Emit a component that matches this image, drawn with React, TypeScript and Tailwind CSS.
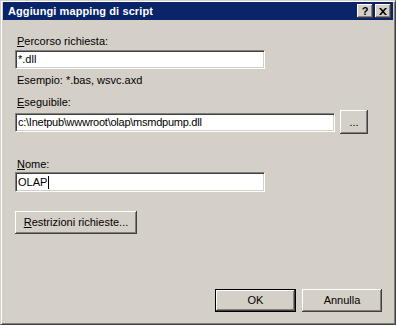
import React from "react";

const sunken =
  "bg-white border border-t-[#808080] border-l-[#808080] border-b-white border-r-white shadow-[inset_1px_1px_0_#404040,inset_-1px_-1px_0_#d4d0c8]";
const raised =
  "bg-[#d4d0c8] shadow-[inset_-1px_-1px_0_#404040,inset_1px_1px_0_#ffffff,inset_-2px_-2px_0_#808080]";

function Label({ k, rest }: { k: string; rest: string }) {
  return (
    <div className="h-[13px] leading-[13px] pl-[2px]">
      <span className="underline underline-offset-[1px]">{k}</span>
      {rest}
    </div>
  );
}

export default function App() {
  return (
    <div
      className="w-[396px] h-[325px] bg-[#d4d0c8] text-[11px] text-black overflow-hidden flex flex-col border border-t-[#d4d0c8] border-l-[#d4d0c8] border-b-[#404040] border-r-[#404040] shadow-[inset_1px_1px_0_#ffffff,inset_-1px_-1px_0_#808080]"
      style={{ fontFamily: '"Liberation Sans", Arial, sans-serif' }}
    >
      {/* title bar */}
      <div className="mx-[2px] mt-[1px] h-[18px] bg-[#0a246a] flex items-center pl-[5px] pr-[2px]">
        <div className="flex-1 text-white font-bold text-[11px] leading-[18px] tracking-[0.1px]">
          Aggiungi mapping di script
        </div>
        <div className={`w-[16px] h-[14px] ${raised} flex items-center justify-center font-bold text-[11px] leading-none`}>
          ?
        </div>
        <div className={`ml-[2px] w-[16px] h-[14px] ${raised} flex items-center justify-center`}>
          <svg width="8" height="7" viewBox="0 0 8 7">
            <path d="M0 0h2l2 2.2L6 0h2L5 3.5 8 7H6L4 4.8 2 7H0l3-3.5z" fill="#000" />
          </svg>
        </div>
      </div>

      {/* body */}
      <div className="flex-1 flex flex-col pl-[14px] pr-[12px] pt-[15px]">
        <Label k="P" rest="ercorso richiesta:" />
        <div className={`mt-[2px] w-[250px] h-[19px] ${sunken} flex items-center pl-[2px] leading-none text-[11px]`}>
          *.dll
        </div>
        <div className="mt-[5px] h-[13px] leading-[13px] pl-[2px]">Esempio: *.bas, wsvc.axd</div>
        <div className="mt-[9px]">
          <Label k="E" rest="seguibile:" />
        </div>
        <div className="mt-[1px] flex items-center">
          <div className={`w-[320px] h-[19px] ${sunken} flex items-center pl-[2px] leading-none whitespace-nowrap tracking-[-0.25px]`}>
            c:\Inetpub\wwwroot\olap\msmdpump.dll
          </div>
          <div className={`ml-[5px] w-[28px] h-[24px] ${raised} flex items-end justify-center pb-[6px] leading-none`}>
            ...
          </div>
        </div>
        <div className="mt-[24px]">
          <Label k="N" rest="ome:" />
        </div>
        <div className={`mt-[1px] w-[250px] h-[20px] ${sunken} flex items-center pl-[2px] leading-none`}>
          OLAP<span className="inline-block w-[1px] h-[13px] bg-black ml-[1px]" />
        </div>
        <div className={`mt-[19px] w-[122px] h-[23px] ${raised} flex items-center justify-center leading-none`}>
          <span>
            <span className="underline underline-offset-[1px]">R</span>estrizioni richieste...
          </span>
        </div>
        <div className="flex-1" />
        <div className="flex justify-end gap-[6px] pr-[1px] mb-[12px]">
          <div className="w-[81px] h-[23px] border border-black">
            <div className={`w-full h-full ${raised} flex items-center justify-center leading-none`}>OK</div>
          </div>
          <div className={`w-[80px] h-[23px] ${raised} flex items-center justify-center leading-none`}>Annulla</div>
        </div>
      </div>
    </div>
  );
}
